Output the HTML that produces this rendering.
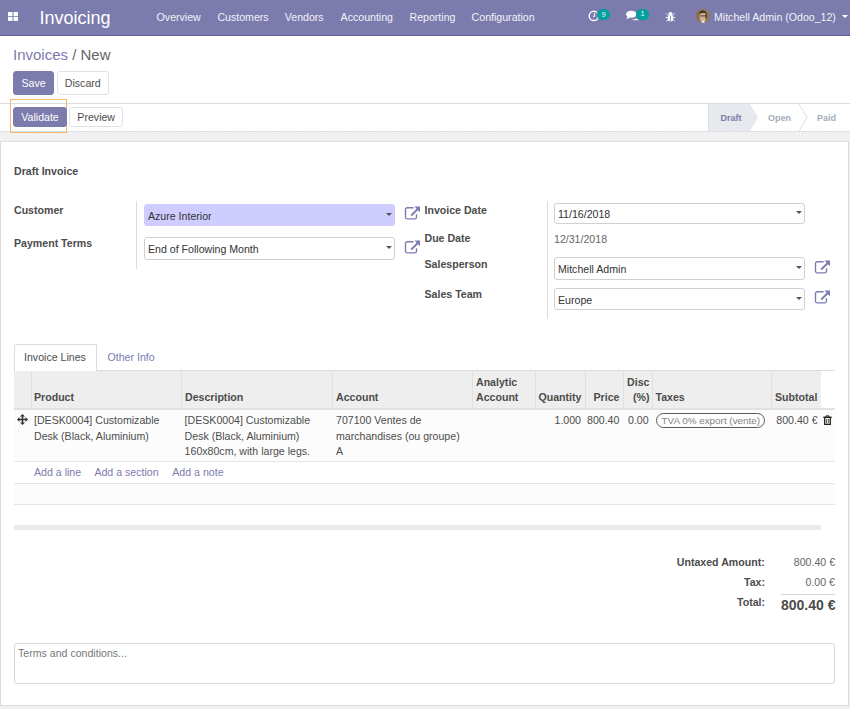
<!DOCTYPE html>
<html><head><meta charset="utf-8">
<style>
*{box-sizing:border-box}
html,body{margin:0;padding:0}
body{width:850px;height:709px;position:relative;overflow:hidden;font-family:"Liberation Sans",sans-serif;font-size:10.6px;color:#4c4c4c;
background-color:#fcfcfc;background-image:radial-gradient(circle,#e6e6e8 0.5px,rgba(230,230,232,0) 1.3px),radial-gradient(circle,#e6e6e8 0.5px,rgba(230,230,232,0) 1.3px);background-size:3px 3.2px;background-position:0 0,1.5px 1.6px;}
.a{position:absolute;white-space:nowrap;line-height:12px}
.b{font-weight:bold}
#nav{position:absolute;left:0;top:0;width:850px;height:36px;background:#7c7bad;border-bottom:1px solid #5f5e8f}
#nav .m{position:absolute;top:11px;color:#f2f2f8;line-height:12px}
#cp{position:absolute;left:0;top:36px;width:850px;height:96px;background:#fff;border-bottom:1px solid #dfe1e5}
.btn{position:absolute;height:23px;border-radius:3px;line-height:22px;text-align:center;font-size:10.6px}
.pri{background:#7c7bad;color:#fff;border:1px solid #7c7bad}
.sec{background:#fff;color:#4c4c4c;border:1px solid #dee2e6}
#sheet{position:absolute;left:0;top:141px;width:849px;height:565px;background:#fff;border:1px solid #d9d9df;border-top-color:#e0e0e5}
.inp{position:absolute;border:1px solid #d0d0d0;border-radius:3px;background:#fff}
.inp .t{position:absolute;left:3px;top:5px;line-height:12px;color:#333}
.caret{position:absolute;width:0;height:0;border-left:3px solid transparent;border-right:3px solid transparent;border-top:3px solid #555}
.lbl{position:absolute;font-weight:bold;color:#4c4c4c;line-height:12px;white-space:nowrap}
.ext{position:absolute}
.th{position:absolute;font-weight:bold;color:#4c4c4c;line-height:15px;white-space:nowrap}
.td{position:absolute;color:#4c4c4c;line-height:15.5px;white-space:nowrap}
.vl{position:absolute;width:1px;background:#dcdcdc}
.hl{position:absolute;height:1px;background:#e2e2e2}
</style></head>
<body>
<!-- NAVBAR -->
<div id="nav">
  <svg style="position:absolute;left:8.1px;top:11.6px" width="10.2" height="9" viewBox="0 0 10.2 9"><rect x="0" y="0" width="4.5" height="4.1" fill="#fff"/><rect x="5.5" y="0" width="4.6" height="4.1" fill="#fff"/><rect x="0" y="4.9" width="4.5" height="4" fill="#fff"/><rect x="5.5" y="4.9" width="4.6" height="4" fill="#fff"/></svg>
  <div class="a" style="left:39.5px;top:7.7px;font-size:18px;line-height:20px;color:#fff">Invoicing</div>
  <div class="m" style="left:156.6px">Overview</div>
  <div class="m" style="left:217.4px">Customers</div>
  <div class="m" style="left:284.8px">Vendors</div>
  <div class="m" style="left:340.6px">Accounting</div>
  <div class="m" style="left:409.5px">Reporting</div>
  <div class="m" style="left:471.6px">Configuration</div>
  <!-- clock -->
  <svg style="position:absolute;left:588px;top:10px" width="12" height="12" viewBox="0 0 12 12"><circle cx="5.8" cy="5.9" r="4.6" fill="none" stroke="#fff" stroke-width="1.4"/><path d="M6.6 3V6.3H5" fill="none" stroke="#fff" stroke-width="1"/></svg>
  <div style="position:absolute;left:597px;top:9px;width:13px;height:11px;border-radius:5.5px;background:#00a09d;color:#e8f6f5;font-size:7.5px;line-height:11px;text-align:center">9</div>
  <!-- chat -->
  <svg style="position:absolute;left:625px;top:10px" width="16" height="12" viewBox="0 0 16 12"><ellipse cx="6.3" cy="4.3" rx="5.3" ry="3.5" fill="#fff"/><path d="M2.3 6.3 L1.6 9.3 L5 7.5Z" fill="#fff"/><path d="M6.5 9.2 Q9.5 9.8 12 8.6 L13.8 10.8 L11.3 10 Q8.5 10.8 6.5 9.2Z" fill="#fff"/></svg>
  <div style="position:absolute;left:636.2px;top:9.2px;width:12.7px;height:10.6px;border-radius:5.3px;background:#00a09d;color:#e8f6f5;font-size:7.5px;line-height:10.6px;text-align:center">1</div>
  <!-- bug -->
  <svg style="position:absolute;left:665px;top:10.5px" width="11" height="11" viewBox="0 0 11 11"><ellipse cx="5.5" cy="2.4" rx="2.1" ry="1.5" fill="#fff"/><rect x="2.9" y="3.7" width="5.2" height="6.6" rx="1.9" fill="#fff"/><path d="M1.2 2.4 L3 4.4 M9.8 2.4 L8 4.4 M0.6 6.6 H3 M10.4 6.6 H8 M1.2 10.3 L3 8.6 M9.8 10.3 L8 8.6" stroke="#fff" stroke-width="0.9"/><path d="M5.5 4.6V10" stroke="#7c7bad" stroke-width="0.8"/></svg>
  <!-- avatar -->
  <svg style="position:absolute;left:696.3px;top:8.9px" width="14" height="14" viewBox="0 0 14 14"><defs><clipPath id="av"><circle cx="7" cy="7" r="6.9"/></clipPath></defs><g clip-path="url(#av)"><rect width="14" height="14" fill="#96784e"/><rect x="0" y="0" width="4" height="14" fill="#8a6e48"/><ellipse cx="6.8" cy="8" rx="3.3" ry="4.8" fill="#cfae98"/><path d="M2.8 5.2 Q4 1.2 7.5 1.6 Q10.5 2 10.6 5.5 L9.8 4 Q7 3.4 4 4.4Z" fill="#3b2d24"/><rect x="4" y="6.4" width="6" height="1" fill="#5a4538"/><rect x="5.6" y="11.6" width="3" height="3" fill="#e3e3e3"/><rect x="9.5" y="4.5" width="1.2" height="5" fill="#3b2d24"/></g></svg>
  <div class="m" style="left:714px">Mitchell Admin (Odoo_12)</div>
  <div class="caret" style="left:842px;top:15px;border-top-color:#fff;border-left-width:3px;border-right-width:3px;border-top-width:3.5px"></div>
</div>

<!-- CONTROL PANEL -->
<div id="cp">
  <div class="a" style="left:13px;top:10px;font-size:15px;line-height:17px;color:#7c7bad">Invoices <span style="color:#666">/ New</span></div>
  <div class="btn pri" style="left:13px;top:34.5px;width:41px;height:24px;line-height:23px">Save</div>
  <div class="btn sec" style="left:56.5px;top:34.5px;width:52.5px;height:24px;line-height:23px">Discard</div>
</div>
<!-- statusbar row -->
<div style="position:absolute;left:0;top:103px;width:850px;height:28px;background:#fff;border-top:1px solid #dcdcdc"></div>
<div style="position:absolute;left:10.3px;top:99.3px;width:56.8px;height:33.6px;border:1.7px solid #f6b770"></div>
<div class="btn pri" style="left:13px;top:107px;width:54px;height:20.2px;line-height:18.6px">Validate</div>
<div class="btn sec" style="left:69.2px;top:107px;width:54px;height:20.2px;line-height:18.6px">Preview</div>
<svg style="position:absolute;left:700px;top:104px" width="150" height="27" viewBox="0 0 150 27">
  <path d="M8 0 H50 L58 13.5 L50 27 H8 Z" fill="#e6e9ed"/><path d="M8.5 0 V27" stroke="#dcdfe4" stroke-width="1"/>
  <path d="M99 0 L107 13.5 L99 27" fill="none" stroke="#dcdfe4" stroke-width="1"/>
</svg>
<div class="a b" style="left:720.5px;top:112px;font-size:9px;color:#7c7bad">Draft</div>
<div class="a b" style="left:768px;top:112px;font-size:9px;color:#a4acbb">Open</div>
<div class="a b" style="left:817px;top:112px;font-size:9px;color:#a4acbb">Paid</div>

<!-- SHEET -->
<div id="sheet"></div>

<div class="lbl" style="left:14px;top:165.4px">Draft Invoice</div>

<div class="lbl" style="left:14px;top:203.5px">Customer</div>
<div class="lbl" style="left:14px;top:237.4px">Payment Terms</div>
<div class="vl" style="left:136px;top:201px;height:68px"></div>

<div class="inp" style="left:144px;top:204px;width:251px;height:22px;background:#cfccff;border-color:#cfccff"><div class="t">Azure Interior</div><div class="caret" style="left:240.5px;top:7.5px"></div></div>
<div class="inp" style="left:144px;top:237px;width:251px;height:23px"><div class="t">End of Following Month</div><div class="caret" style="left:240.5px;top:7.5px"></div></div>

<svg class="ext" style="left:404px;top:206px" width="17" height="15" viewBox="0 0 17 15"><path d="M9.6 1.8 H3.3 A1.8 1.8 0 0 0 1.5 3.6 V11.1 A1.8 1.8 0 0 0 3.3 12.9 H10.7 A1.8 1.8 0 0 0 12.5 11.1 V8.2" fill="none" stroke="#7d7cb0" stroke-width="1.4"/><path d="M7.2 9.5 L13.8 3" stroke="#7c7bad" stroke-width="1.8"/><path d="M10.4 0.6 H16 V6.2 Z" fill="#7c7bad"/></svg>
<svg class="ext" style="left:404px;top:240px" width="17" height="15" viewBox="0 0 17 15"><path d="M9.6 1.8 H3.3 A1.8 1.8 0 0 0 1.5 3.6 V11.1 A1.8 1.8 0 0 0 3.3 12.9 H10.7 A1.8 1.8 0 0 0 12.5 11.1 V8.2" fill="none" stroke="#7d7cb0" stroke-width="1.4"/><path d="M7.2 9.5 L13.8 3" stroke="#7c7bad" stroke-width="1.8"/><path d="M10.4 0.6 H16 V6.2 Z" fill="#7c7bad"/></svg>

<div class="lbl" style="left:424.5px;top:204px">Invoice Date</div>
<div class="lbl" style="left:424.5px;top:232px">Due Date</div>
<div class="lbl" style="left:424.5px;top:257.6px">Salesperson</div>
<div class="lbl" style="left:424.5px;top:288px">Sales Team</div>
<div class="vl" style="left:547px;top:201px;height:118px"></div>

<div class="inp" style="left:554px;top:203px;width:251px;height:21px"><div class="t" style="top:4px">11/16/2018</div><div class="caret" style="left:240.5px;top:7px"></div></div>
<div class="a" style="left:554px;top:233px;color:#666">12/31/2018</div>
<div class="inp" style="left:554px;top:257px;width:251px;height:23px"><div class="t">Mitchell Admin</div><div class="caret" style="left:240.5px;top:7.5px"></div></div>
<div class="inp" style="left:554px;top:288px;width:251px;height:22px"><div class="t">Europe</div><div class="caret" style="left:240.5px;top:7.5px"></div></div>
<svg class="ext" style="left:814px;top:260.3px" width="17" height="15" viewBox="0 0 17 15"><path d="M9.6 1.8 H3.3 A1.8 1.8 0 0 0 1.5 3.6 V11.1 A1.8 1.8 0 0 0 3.3 12.9 H10.7 A1.8 1.8 0 0 0 12.5 11.1 V8.2" fill="none" stroke="#7d7cb0" stroke-width="1.4"/><path d="M7.2 9.5 L13.8 3" stroke="#7c7bad" stroke-width="1.8"/><path d="M10.4 0.6 H16 V6.2 Z" fill="#7c7bad"/></svg>
<svg class="ext" style="left:814px;top:290.3px" width="17" height="15" viewBox="0 0 17 15"><path d="M9.6 1.8 H3.3 A1.8 1.8 0 0 0 1.5 3.6 V11.1 A1.8 1.8 0 0 0 3.3 12.9 H10.7 A1.8 1.8 0 0 0 12.5 11.1 V8.2" fill="none" stroke="#7d7cb0" stroke-width="1.4"/><path d="M7.2 9.5 L13.8 3" stroke="#7c7bad" stroke-width="1.8"/><path d="M10.4 0.6 H16 V6.2 Z" fill="#7c7bad"/></svg>

<!-- TABS -->
<div style="position:absolute;left:14px;top:344px;width:83px;height:28px;border:1px solid #dcdcdc;border-bottom:none;background:#fff;border-radius:2px 2px 0 0"></div>
<div class="a" style="left:24px;top:351px">Invoice Lines</div>
<div class="a" style="left:107.5px;top:351px;color:#7c7bad">Other Info</div>
<div class="hl" style="left:97px;top:370px;width:738px;background:#dcdcdc"></div>

<!-- TABLE HEADER -->
<div style="position:absolute;left:14px;top:371px;width:807px;height:37px;background:#eeeeee"></div><div style="position:absolute;left:14px;top:408px;width:821px;height:2px;background:#e0e1e5"></div>
<div class="vl" style="left:31px;top:371px;height:37px;background:#e0e0e0"></div>
<div class="vl" style="left:181px;top:371px;height:37px;background:#e0e0e0"></div>
<div class="vl" style="left:332px;top:371px;height:37px;background:#e0e0e0"></div>
<div class="vl" style="left:472px;top:371px;height:37px;background:#e0e0e0"></div>
<div class="vl" style="left:535px;top:371px;height:37px;background:#e0e0e0"></div>
<div class="vl" style="left:585px;top:371px;height:37px;background:#e0e0e0"></div>
<div class="vl" style="left:623px;top:371px;height:37px;background:#e0e0e0"></div>
<div class="vl" style="left:652px;top:371px;height:37px;background:#e0e0e0"></div>
<div class="vl" style="left:771px;top:371px;height:37px;background:#e0e0e0"></div>

<div class="th" style="left:34px;top:390px">Product</div>
<div class="th" style="left:185px;top:390px">Description</div>
<div class="th" style="left:336px;top:390px">Account</div>
<div class="th" style="left:476px;top:375px">Analytic<br>Account</div>
<div class="th" style="left:538.5px;top:390px">Quantity</div>
<div class="th" style="left:593.5px;top:390px">Price</div>
<div class="th" style="left:621.5px;top:375px;text-align:right;width:28px">Disc<br>(%)</div>
<div class="th" style="left:655.5px;top:390px">Taxes</div>
<div class="th" style="left:775px;top:390px">Subtotal</div>

<!-- ROW -->
<div style="position:absolute;left:14px;top:410px;width:821px;height:52px;background:#fcfcfc;border-bottom:1px solid #e6e6e6"></div>
<svg style="position:absolute;left:17px;top:414.3px" width="11" height="11" viewBox="0 0 11 11"><path d="M5.5 0 L8 2.5 H6.3 V4.7 H8.5 V3 L11 5.5 L8.5 8 V6.3 H6.3 V8.5 H8 L5.5 11 L3 8.5 H4.7 V6.3 H2.5 V8 L0 5.5 L2.5 3 V4.7 H4.7 V2.5 H3 Z" fill="#333"/></svg>
<div class="td" style="left:34px;top:413px">[DESK0004] Customizable<br>Desk (Black, Aluminium)</div>
<div class="td" style="left:184.6px;top:413px">[DESK0004] Customizable<br>Desk (Black, Aluminium)<br>160x80cm, with large legs.</div>
<div class="td" style="left:336px;top:413px">707100 Ventes de<br>marchandises (ou groupe)<br>A</div>
<div class="td" style="left:554.5px;top:413px">1.000</div>
<div class="td" style="left:587px;top:413px">800.40</div>
<div class="td" style="left:628px;top:413px">0.00</div>
<div style="position:absolute;left:655.5px;top:413px;width:109.5px;height:14.8px;border:1.8px solid #5a5a5a;border-radius:7.5px"></div>
<div class="a" style="left:661.5px;top:414.5px;font-size:9.9px;color:#858585">TVA 0% export (vente)</div>
<div class="td" style="left:776.3px;top:413px">800.40 €</div>
<svg style="position:absolute;left:823px;top:415px" width="9" height="10" viewBox="0 0 9 10"><path d="M3 2 V0.9 H6 V2" fill="none" stroke="#222" stroke-width="1"/><rect x="0.3" y="1.6" width="8.4" height="1.4" fill="#222"/><path d="M1.7 3 V9.4 H7.3 V3" fill="none" stroke="#222" stroke-width="1.3"/><path d="M3.6 4 V8.4 M5.4 4 V8.4" stroke="#444" stroke-width="0.9"/></svg>

<div class="a" style="left:34px;top:466.2px;color:#7c7bad">Add a line</div>
<div class="a" style="left:94.4px;top:466.2px;color:#7c7bad">Add a section</div>
<div class="a" style="left:172.3px;top:466.2px;color:#7c7bad">Add a note</div>
<div class="hl" style="left:14px;top:483px;width:821px;background:#e6e6e6"></div>
<div style="position:absolute;left:14px;top:484px;width:821px;height:20px;background:#fcfcfc"></div>
<div class="hl" style="left:14px;top:504px;width:821px;background:#e6e6e6"></div>
<div style="position:absolute;left:14px;top:525px;width:807px;height:5.4px;background:#eaeaea"></div>

<!-- TOTALS -->
<div class="lbl" style="left:676.8px;top:556px">Untaxed Amount:</div>
<div class="a" style="left:793.8px;top:556px;color:#666">800.40 €</div>
<div class="lbl" style="left:744px;top:576px">Tax:</div>
<div class="a" style="left:805.5px;top:576px;color:#666">0.00 €</div>
<div class="hl" style="left:781.3px;top:594px;width:54px;background:#d6d6d6"></div>
<div class="lbl" style="left:737px;top:596px">Total:</div>
<div class="a b" style="left:781px;top:597.5px;font-size:14px;line-height:15px;color:#4c4c4c">800.40 €</div>

<!-- TEXTAREA -->
<div style="position:absolute;left:14px;top:643px;width:821px;height:41px;border:1px solid #d8d8d8;border-radius:3px;background:#fff"></div>
<div class="a" style="left:18px;top:647px;color:#777">Terms and conditions...</div>
</body></html>
